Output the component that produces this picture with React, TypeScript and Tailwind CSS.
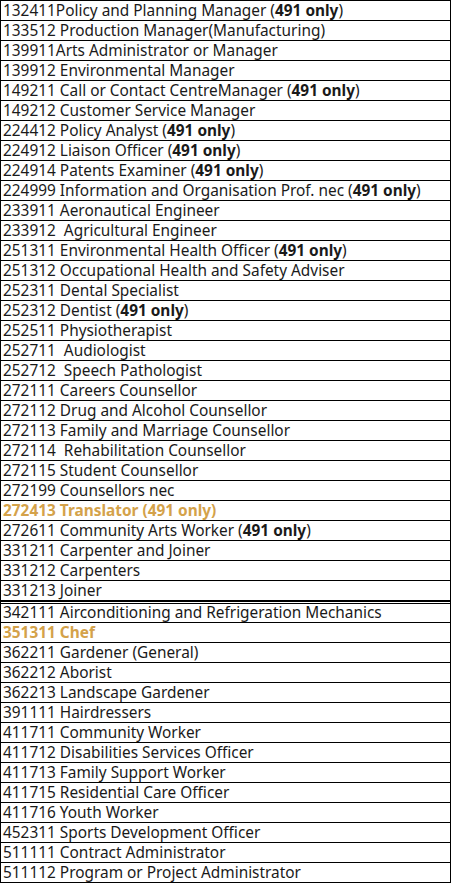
const rows: { code: string; name: string; only?: boolean; gold?: boolean; thick?: boolean }[] = [
  { code: "132411", name: "Policy and Planning Manager (", only: true },
  { code: "133512 ", name: "Production Manager(Manufacturing)" },
  { code: "139911", name: "Arts Administrator or Manager" },
  { code: "139912 ", name: "Environmental Manager" },
  { code: "149211 ", name: "Call or Contact CentreManager (", only: true },
  { code: "149212 ", name: "Customer Service Manager" },
  { code: "224412 ", name: "Policy Analyst (", only: true },
  { code: "224912 ", name: "Liaison Officer (", only: true },
  { code: "224914 ", name: "Patents Examiner (", only: true },
  { code: "224999 ", name: "Information and Organisation Prof. nec (", only: true },
  { code: "233911 ", name: "Aeronautical Engineer" },
  { code: "233912  ", name: "Agricultural Engineer" },
  { code: "251311 ", name: "Environmental Health Officer (", only: true },
  { code: "251312 ", name: "Occupational Health and Safety Adviser" },
  { code: "252311 ", name: "Dental Specialist" },
  { code: "252312 ", name: "Dentist (", only: true },
  { code: "252511 ", name: "Physiotherapist" },
  { code: "252711  ", name: "Audiologist" },
  { code: "252712  ", name: "Speech Pathologist" },
  { code: "272111 ", name: "Careers Counsellor" },
  { code: "272112 ", name: "Drug and Alcohol Counsellor" },
  { code: "272113 ", name: "Family and Marriage Counsellor" },
  { code: "272114  ", name: "Rehabilitation Counsellor" },
  { code: "272115 ", name: "Student Counsellor" },
  { code: "272199 ", name: "Counsellors nec" },
  { code: "272413 ", name: "Translator (491 only)", gold: true },
  { code: "272611 ", name: "Community Arts Worker (", only: true },
  { code: "331211 ", name: "Carpenter and Joiner" },
  { code: "331212 ", name: "Carpenters" },
  { code: "331213 ", name: "Joiner" },
  { code: "342111 ", name: "Airconditioning and Refrigeration Mechanics", thick: true },
  { code: "351311 ", name: "Chef", gold: true },
  { code: "362211 ", name: "Gardener (General)" },
  { code: "362212 ", name: "Aborist" },
  { code: "362213 ", name: "Landscape Gardener" },
  { code: "391111 ", name: "Hairdressers" },
  { code: "411711 ", name: "Community Worker" },
  { code: "411712 ", name: "Disabilities Services Officer" },
  { code: "411713 ", name: "Family Support Worker" },
  { code: "411715 ", name: "Residential Care Officer" },
  { code: "411716 ", name: "Youth Worker" },
  { code: "452311 ", name: "Sports Development Officer" },
  { code: "511111 ", name: "Contract Administrator" },
  { code: "511112 ", name: "Program or Project Administrator" },
];

export default function App() {
  return (
    <div className="bg-white w-[453px] h-[884px] overflow-hidden font-['Noto_Sans',sans-serif] text-[15.4px] text-[#1a1a1a]">
      <div className="w-[451px] border-l border-r border-t border-black">
        {rows.map((r) => (
          <div
            key={r.code}
            className={
              "border-b border-black pl-[2px] whitespace-pre " +
              (r.thick
                ? "border-t-[3px] border-t-black border-double h-[22px] leading-[18px] "
                : "h-[20px] leading-[19px] ") +
              (r.gold ? "font-bold text-[#d4a24a]" : "")
            }
          >
            {r.code}
            {r.name}
            {r.only && (
              <>
                <span className="font-bold">491 only</span>)
              </>
            )}
          </div>
        ))}
      </div>
    </div>
  );
}
